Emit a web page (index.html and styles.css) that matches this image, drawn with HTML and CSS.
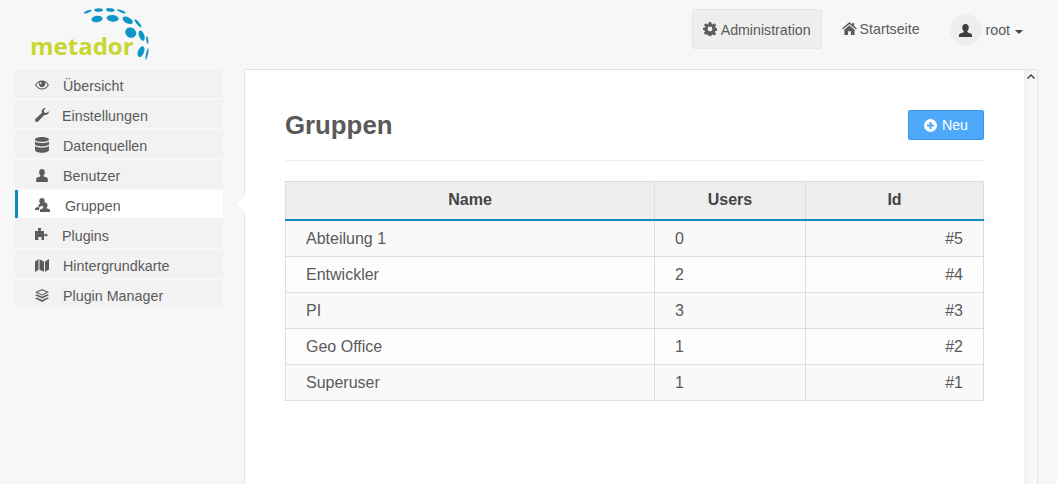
FILE: index.html
```html
<!DOCTYPE html>
<html lang="de">
<head>
<meta charset="utf-8">
<title>Gruppen</title>
<link rel="stylesheet" href="styles.css">
</head>
<body>
<header class="topbar">
  <a class="logo">
    <svg class="logo-dots" viewBox="0 0 480 210" width="160" height="70" aria-hidden="true">
      <g fill="#0f96c8">
        <ellipse cx="263" cy="35" rx="12" ry="3.5" transform="rotate(-22 263 35)"/>
        <ellipse cx="296" cy="30" rx="13" ry="5.5"/>
        <ellipse cx="331" cy="30" rx="13" ry="5.5" transform="rotate(6 331 30)"/>
        <ellipse cx="364" cy="34" rx="14" ry="3.5" transform="rotate(22 364 34)"/>
        <ellipse cx="291" cy="57" rx="17" ry="9.5" transform="rotate(-6 291 57)"/>
        <ellipse cx="338" cy="55" rx="18" ry="10" transform="rotate(6 338 55)"/>
        <ellipse cx="383" cy="61" rx="17" ry="9" transform="rotate(28 383 61)"/>
        <ellipse cx="414" cy="70" rx="15" ry="4" transform="rotate(50 414 70)"/>
        <ellipse cx="392" cy="98" rx="17" ry="15" transform="rotate(30 392 98)"/>
        <ellipse cx="425" cy="107" rx="16" ry="8" transform="rotate(70 425 107)"/>
        <ellipse cx="442" cy="120" rx="11" ry="3" transform="rotate(82 442 120)"/>
        <ellipse cx="423" cy="155" rx="17" ry="9" transform="rotate(-68 423 155)"/>
        <ellipse cx="441" cy="162" rx="18" ry="3" transform="rotate(-78 441 162)"/>
      </g>
    </svg>
    <span class="logo-text">metador</span>
  </a>
  <nav class="topnav">
    <a class="topnav-item topnav-item-active">
      <svg class="ico" viewBox="0 0 16 16" width="14" height="14"><path fill-rule="evenodd" d="M6.600 0h2.800l.4 2.200 1.300.6L13 1.500l2 2-1.300 1.900.6 1.300 2.200.4v2.800l-2.200.4-.6 1.300 1.300 1.900-2 2-1.900-1.300-1.300.6-.4 2.200H6.600l-.4-2.200-1.300-.6L3 14.500l-2-2 1.300-1.900-.6-1.300L0 9V6.600l2.200-.4.500-1.300L1 3.500l2-2 1.900 1.300 1.300-.6zM8 5.200a2.800 2.800 0 1 0 0 5.600 2.800 2.800 0 0 0 0-5.600z"/></svg>
      <span class="nav-label">Administration</span>
    </a>
    <a class="topnav-item topnav-home">
      <svg class="ico" viewBox="0 0 16 14" width="15" height="13"><path d="M8 0l3 2.600V1h2v3.300L16 7l-1 1.200L8 2.200 1 8.200 0 7zM8 3.600l5.500 4.700V14H9.600v-4H6.400v4H2.500V8.300z"/></svg>
      <span class="nav-label">Startseite</span>
    </a>
    <a class="usermenu">
      <span class="avatar">
        <svg class="ico ico-dark" viewBox="0 0 16 16" width="15" height="15"><path d="M8 1c2.200 0 3.500 1.700 3.500 3.800 0 1.800-.8 3.200-1.700 4 0 1 .8 1.400 2.200 1.900 1.500.5 3 1 3 2.300v2H1v-2c0-1.300 1.500-1.800 3-2.300 1.400-.5 2.200-.9 2.200-1.900-.9-.8-1.700-2.200-1.700-4C4.500 2.700 5.800 1 8 1z"/></svg>
      </span>
      <span class="username">root</span>
      <span class="caret"></span>
    </a>
  </nav>
</header>
<div class="layout">
  <ul class="sidenav">
    <li class="sidenav-item">
      <svg class="ico side-ico" viewBox="0 0 14 14" width="14" height="14"><path fill-rule="evenodd" d="M7 2.500c3 0 5.500 1.900 7 4.500-1.500 2.600-4 4.500-7 4.500S1.500 9.600 0 7c1.500-2.600 4-4.500 7-4.500zM1.300 7C2.600 9 4.600 10.500 7 10.500S11.400 9 12.700 7c-.8-1.200-1.800-2.200-3-2.900a3.200 3.200 0 1 1-5.400 0C3.100 4.800 2.100 5.800 1.300 7zM5.600 4.200a1 1 0 0 0 0 2 1 1 0 0 0 0-2z"/></svg>
      <span class="side-label">Übersicht</span>
    </li>
    <li class="sidenav-item sidenav-item-tight">
      <svg class="ico side-ico" viewBox="0 0 14 14" width="14" height="14"><path d="M13.800 3.200c.4 2-1.300 4-3.400 3.900-.4 0-.8-.1-1.100-.2L3.300 13.300c-.8.800-2 .8-2.700.1-.8-.8-.8-2 0-2.700l6.400-6c-.2-.4-.3-.8-.3-1.300C6.700 1.400 8.900-.4 11 .1L8.800 2.300l.4 2.300 2.300.5z"/></svg>
      <span class="side-label">Einstellungen</span>
    </li>
    <li class="sidenav-item">
      <svg class="ico side-ico" viewBox="0 0 14 16" width="14" height="16"><path d="M7 0c3.900 0 7 1 7 2.400S10.900 4.800 7 4.800 0 3.800 0 2.400 3.100 0 7 0zM0 4.400C1.400 5.500 4 6.100 7 6.100s5.600-.6 7-1.700v2.700C14 8.400 10.900 9.500 7 9.500S0 8.400 0 7.100zM0 9.100c1.400 1.100 4 1.700 7 1.700s5.600-.6 7-1.700v3.900c0 1.600-3.100 2.700-7 2.700s-7-1.100-7-2.700z"/></svg>
      <span class="side-label">Datenquellen</span>
    </li>
    <li class="sidenav-item">
      <svg class="ico side-ico" viewBox="0 0 14 13" width="14" height="13"><path d="M7 0c1.800 0 2.900 1.400 2.900 3.100 0 1.500-.6 2.600-1.400 3.300 0 .9.700 1.200 1.900 1.600 1.300.4 2.400.9 2.400 2V13H1.200v-3c0-1.100 1.100-1.600 2.400-2 1.200-.4 1.900-.7 1.900-1.600-.8-.7-1.400-1.800-1.400-3.300C4.100 1.400 5.200 0 7 0z"/></svg>
      <span class="side-label">Benutzer</span>
    </li>
    <li class="sidenav-item sidenav-item-active">
      <svg class="ico side-ico" viewBox="0 0 15 14" width="15" height="14">
        <path d="M7 0c1.600 0 2.700 1.200 2.700 2.900 0 1.200-.4 2.200-1 2.800H9v1.800c-1.600.1-3 .3-3.800 1.200L3.400 9V6.800L5.300 6c-.6-.7-1-1.800-1-3.100C4.300 1.200 5.400 0 7 0zM0 10.800c0-1 1.600-1.300 2.800-1.700l2 .6C4.200 10.300 4 11 4 12H0z"/>
        <path d="M10 4.600c1.500 0 2.500 1.100 2.500 2.600 0 1-.4 1.900-1 2.400 0 .6.500.9 1.400 1.200 1.200.4 2.100.7 2.100 1.500V14H4.900v-1.700c0-1 .9-1.200 2-1.500 1-.3 1.600-.6 1.600-1.200-.6-.5-1-1.400-1-2.400 0-1.500 1-2.600 2.500-2.600z"/>
      </svg>
      <span class="side-label">Gruppen</span>
    </li>
    <li class="sidenav-item sidenav-item-tight">
      <svg class="ico side-ico" viewBox="0 0 14 14" width="14" height="14"><path d="M3.200 0h2.600c.5.500.4 1 .1 1.500-.3.500-.2 1 .1 1.500H9v3c.5.400 1 .5 1.500.1.500-.4 1-.5 1.500-.1.600.5.600 1.700 0 2.200-.5.400-1 .3-1.500-.1-.5-.4-1-.3-1.500.1v3.700H6.500c-.3-.6-.2-1 .1-1.400.4-.6 0-1.300-.6-1.400-.6-.2-1.700-.2-2.200 0-.7.200-1 .8-.6 1.400.3.400.4.800.1 1.400H0V3h3c.4-.5.400-1 .1-1.500C2.800 1 2.700.500 3.200 0z"/></svg>
      <span class="side-label">Plugins</span>
    </li>
    <li class="sidenav-item">
      <svg class="ico side-ico" viewBox="0 0 14 13" width="14" height="13"><path d="M0 2.400L3.500.3v10.400L0 13zM4.500.2L9 2.400v10.400l-4.500-2.100zM10 2.400L14 0v10.500L10 12.800z"/></svg>
      <span class="side-label">Hintergrundkarte</span>
    </li>
    <li class="sidenav-item">
      <svg class="ico side-ico" viewBox="0 0 14 13" width="14" height="13"><path fill-rule="evenodd" d="M7 0l7 3.300-7 3.300L0 3.300zM7 1.200L2.600 3.300 7 5.400l4.400-2.100zM1.700 5.300L7 7.800l5.300-2.500L14 6.200 7 9.500 0 6.200zM1.700 8.400L7 10.900l5.300-2.500 1.700.9L7 13 0 9.300z"/></svg>
      <span class="side-label">Plugin Manager</span>
    </li>
  </ul>
  <main class="panel">
    <span class="panel-arrow"></span>
    <section class="panel-body">
      <div class="page-head">
        <h1 class="page-title">Gruppen</h1>
        <button class="btn-new" type="button">
          <svg class="ico ico-white" viewBox="0 0 14 14" width="13" height="13"><path fill-rule="evenodd" d="M7 0a7 7 0 1 1 0 14A7 7 0 0 1 7 0zM5.800 3.200v2.600H3.200v2.400h2.600v2.600h2.400V8.200h2.600V5.800H8.200V3.200z"/></svg>
          <span>Neu</span>
        </button>
      </div>
      <table class="grid">
        <colgroup>
          <col class="col-name"><col class="col-users"><col class="col-id">
        </colgroup>
        <thead>
          <tr><th>Name</th><th>Users</th><th>Id</th></tr>
        </thead>
        <tbody>
          <tr><td>Abteilung 1</td><td>0</td><td class="cell-id">#5</td></tr>
          <tr><td>Entwickler</td><td>2</td><td class="cell-id">#4</td></tr>
          <tr><td>PI</td><td>3</td><td class="cell-id">#3</td></tr>
          <tr><td>Geo Office</td><td>1</td><td class="cell-id">#2</td></tr>
          <tr><td>Superuser</td><td>1</td><td class="cell-id">#1</td></tr>
        </tbody>
      </table>
    </section>
    <div class="scrolltrack">
      <svg class="scroll-up" viewBox="0 0 8 5" width="8" height="5"><path d="M0 4l4-4 4 4-1 1-3-3-3 3z"/></svg>
    </div>
  </main>
</div>
</body>
</html>
```
FILE: styles.css
```css
* { box-sizing: border-box; }
html, body { margin: 0; height: 484px; overflow: hidden; }
body {
  background: #f7f7f7;
  color: #5a5a5a;
  font-family: "Liberation Sans", Arial, sans-serif;
  font-size: 14.2px;
  line-height: 20px;
}
.ico { fill: #5c5c5c; flex: none; display: block; }
.ico-dark { fill: #3f3f3f; }
.ico-white { fill: #fff; }

.topbar { display: flex; height: 69px; }
.logo { position: relative; display: block; width: 160px; height: 69px; padding: 31px 0 0 30px; }
.logo-dots { position: absolute; left: 0; top: 0; }
.logo-text {
  display: block;
  font-family: "Open Sans", sans-serif;
  font-weight: 700;
  font-size: 24px;
  line-height: 30px;
  color: #c8d62f;
}
.topnav { display: flex; align-items: flex-start; margin-left: auto; padding: 9px 34px 0 0; }
.topnav-item { display: flex; align-items: center; gap: 4px; height: 40px; padding: 0 10px; border: 1px solid transparent; border-radius: 3px; }
.topnav-item-active { background: #eee; border-color: #e7e7e7; }
.topnav-home { margin: -1px 0 0 9px; gap: 3px; }
.nav-label { padding-top: 2px; }
.usermenu { display: flex; align-items: center; margin: 5px 0 0 19px; height: 32px; }
.avatar { display: flex; align-items: center; justify-content: center; width: 32px; height: 32px; border-radius: 50%; background: #eee; }
.username { margin-left: 4px; }
.caret { width: 0; height: 0; margin: 3px 0 0 5px; border: 4px solid transparent; border-top-color: #444; border-bottom: 0; }

.layout { display: flex; align-items: flex-start; padding-left: 15px; }
.sidenav { list-style: none; margin: 1px 0 0; padding: 0; width: 208px; display: flex; flex-direction: column; gap: 2px; }
.sidenav-item { display: flex; align-items: center; height: 28px; padding-left: 20px; background: #f2f2f2; }
.sidenav-item .side-ico { margin: 2px 14px 0 0; }
.sidenav-item-tight .side-ico { margin-right: 13px; }
.side-label { padding-top: 4px; font-size: 14.3px; }
.sidenav-item-active { background: #fff; border-left: 3px solid #0f8cc0; padding-left: 17px; box-shadow: 0 1px 1px #ececec; }
.sidenav-item-active .side-ico { margin-right: 15px; }

.panel {
  position: relative;
  display: flex;
  width: 794px;
  height: 420px;
  margin-left: 21px;
  background: #fff;
  border: 1px solid #e3e3e3;
  border-bottom: 0;
  border-radius: 2px 2px 0 0;
}
.panel-arrow {
  position: absolute;
  left: -6px;
  top: 128px;
  width: 12px;
  height: 12px;
  background: #fff;
  transform: rotate(45deg);
}
.panel-body { flex: 1; padding: 40px 40px 0; }
.scrolltrack { width: 14px; padding: 4px 0 0 3px; background: linear-gradient(to right, #f2f1f0, #fbfbfb); }
.scroll-up { fill: #444; display: block; }

.page-head { display: flex; justify-content: space-between; align-items: flex-start; height: 51px; border-bottom: 1px solid #eee; }
.page-title { margin: 0; font-size: 25.8px; line-height: 30px; font-weight: 700; color: #5a5a5a; }
.btn-new {
  display: flex;
  align-items: center;
  justify-content: center;
  gap: 5px;
  width: 76px;
  height: 30px;
  padding: 0;
  background: #4ea9fb;
  border: 1px solid #2e9bf0;
  border-radius: 2px;
  color: #fff;
  font: inherit;
}
.grid { width: 698px; margin-top: 20px; border-collapse: collapse; table-layout: fixed; }
.col-name { width: 369px; }
.col-users { width: 151px; }
.col-id { width: 178px; }
.grid th {
  height: 38px;
  padding: 0;
  background: #eee;
  border: 1px solid #ddd;
  border-bottom: 2px solid #0f8cc0;
  color: #444;
  font-size: 16px;
  font-weight: 700;
  text-align: center;
}
.grid td { height: 36px; padding: 0 20px; border: 1px solid #ddd; font-size: 16px; }
.grid tbody tr:first-child td { height: 37px; padding-top: 1px; }
.grid tbody tr:nth-child(odd) { background: #f9f9f9; }
.grid tbody tr:nth-child(even) { background: #fdfdfd; }
.grid .cell-id { text-align: right; }
```
